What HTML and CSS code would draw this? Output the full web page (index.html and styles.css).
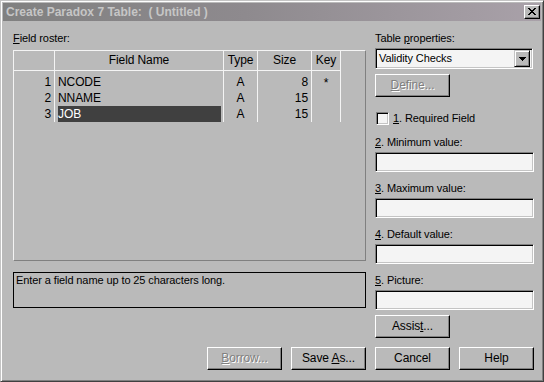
FILE: index.html
```html
<!DOCTYPE html>
<html>
<head>
<meta charset="utf-8">
<link rel="stylesheet" href="styles.css">
</head>
<body>
<div class="window">
  <div class="titlebar">
    <span class="title">Create Paradox 7 Table:&nbsp; ( Untitled )</span>
    <div class="closebtn">
      <svg width="8" height="7" viewBox="0 0 8 7"><path d="M0 0h2v1h-2zM1 1h2v1h-2zM2 2h4v1h-4zM3 3h2v1h-2zM2 4h4v1h-4zM1 5h2v1h-2zM0 6h2v1h-2zM6 0h2v1h-2zM5 1h2v1h-2zM5 5h2v1h-2zM6 6h2v1h-2z" fill="#000"/></svg>
    </div>
  </div>
  <div class="content">
    <div class="leftcol">
      <div class="label"><u>F</u>ield roster:</div>
      <div class="grid">
        <div class="col c-num">
          <div class="hd"></div>
          <div class="cells">
            <div class="cell">1</div>
            <div class="cell">2</div>
            <div class="cell">3</div>
          </div>
        </div>
        <div class="col c-name">
          <div class="hd">Field Name</div>
          <div class="cells">
            <div class="cell"><span class="val">NCODE</span></div>
            <div class="cell"><span class="val">NNAME</span></div>
            <div class="cell"><span class="val sel">JOB</span></div>
          </div>
        </div>
        <div class="col c-type">
          <div class="hd">Type</div>
          <div class="cells">
            <div class="cell">A</div>
            <div class="cell">A</div>
            <div class="cell">A</div>
          </div>
        </div>
        <div class="col c-size">
          <div class="hd">Size</div>
          <div class="cells">
            <div class="cell">8</div>
            <div class="cell">15</div>
            <div class="cell">15</div>
          </div>
        </div>
        <div class="col c-key">
          <div class="hd">Key</div>
          <div class="cells">
            <div class="cell">*</div>
            <div class="cell"></div>
            <div class="cell"></div>
          </div>
        </div>
      </div>
      <div class="status">Enter a field name up to 25 characters long.</div>
      <div class="btnrow">
        <div class="btn disabled"><span><u>B</u>orrow...</span></div>
        <div class="btn"><span>Save <u>A</u>s...</span></div>
      </div>
    </div>
    <div class="rightcol">
      <div class="label">Table <u>p</u>roperties:</div>
      <div class="combo">
        <span class="combo-text">Validity Checks</span>
        <div class="combo-btn">
          <svg width="7" height="4" viewBox="0 0 7 4"><path d="M0 0h7v1h-7zM1 1h5v1h-5zM2 2h3v1h-3zM3 3h1v1h-1z" fill="#000"/></svg>
        </div>
      </div>
      <div class="btn disabled define"><span><u>D</u>efine...</span></div>
      <div class="checkrow">
        <div class="checkbox"></div>
        <span><u>1</u>. Required Field</span>
      </div>
      <div class="field first">
        <div class="label"><u>2</u>. Minimum value:</div>
        <div class="input"></div>
      </div>
      <div class="field">
        <div class="label"><u>3</u>. Maximum value:</div>
        <div class="input"></div>
      </div>
      <div class="field">
        <div class="label"><u>4</u>. Default value:</div>
        <div class="input"></div>
      </div>
      <div class="field">
        <div class="label"><u>5</u>. Picture:</div>
        <div class="input"></div>
      </div>
      <div class="btn assist"><span>Assis<u>t</u>...</span></div>
      <div class="btnrow">
        <div class="btn"><span>Cancel</span></div>
        <div class="btn"><span>Help</span></div>
      </div>
    </div>
  </div>
</div>
</body>
</html>
```
FILE: styles.css
```css
* { box-sizing: border-box; }
html, body { margin: 0; padding: 0; background: #bababa; }
body {
  font-family: "Liberation Sans", Arial, sans-serif;
  font-size: 11px;
  letter-spacing: -0.1px;
  color: #000;
}
u { text-decoration: underline; text-underline-offset: 1px; }

.window {
  width: 544px;
  height: 382px;
  background: #bababa;
  border: 1px solid;
  border-color: #c4c4c4 #404040 #404040 #c4c4c4;
  box-shadow: inset 1px 1px 0 #ffffff, inset -1px -1px 0 #808080;
  padding: 2px;
}

.titlebar {
  height: 18px;
  background: linear-gradient(to right, #808080 0%, #8e8a8e 45%, #a9a1a9 100%);
  display: flex;
  align-items: center;
  justify-content: space-between;
  padding: 0 1px 0 3px;
}
.title {
  font-weight: bold;
  font-size: 12px;
  letter-spacing: 0;
  color: #c6c6c6;
  white-space: pre;
}
.closebtn {
  width: 16px;
  height: 14px;
  background: #bababa;
  border: 1px solid;
  border-color: #ffffff #000 #000 #ffffff;
  box-shadow: inset -1px -1px 0 #808080;
  display: flex;
  align-items: center;
  justify-content: center;
  padding: 0 1px 1px 0;
}
.closebtn svg { display: block; }

.content {
  display: flex;
  gap: 9px;
  padding: 11px 0 0 10px;
}
.leftcol { width: 353px; display: flex; flex-direction: column; }
.rightcol { width: 159px; display: flex; flex-direction: column; }

.label { height: 13px; line-height: 13px; white-space: nowrap; }
.leftcol > .label { margin-bottom: 5px; }
.rightcol > .label { margin-bottom: 3px; }
.field .label { margin-bottom: 3px; }

/* grid */
.grid {
  height: 211px;
  border: 1px solid;
  border-color: #f4f4f4 #808080 #808080 #f4f4f4;
  display: flex;
  align-items: flex-start;
}
.col {
  border-right: 1px solid #f4f4f4;
  display: flex;
  flex-direction: column;
}
.hd {
  height: 20px;
  line-height: 19px;
  border-bottom: 1px solid #f4f4f4;
  text-align: center;
  white-space: nowrap;
  font-size: 12px;
}
.cells { padding-top: 3px; }
.cell { height: 16px; line-height: 16px; white-space: nowrap; font-size: 12px; }
.c-num { width: 41px; }
.c-num .cell { text-align: right; padding-right: 3px; }
.c-name { width: 169px; }
.c-name .cell { padding: 0 2px 0 3px; }
.c-name .val { display: block; height: 16px; }
.c-name .sel { background: #404040; color: #fff; }
.c-type { width: 34px; }
.c-type .cell { text-align: center; }
.c-size { width: 54px; }
.c-size .cell { text-align: right; padding-right: 3px; }
.c-key { width: 29px; }
.c-key .cell { text-align: center; padding-top: 1px; }

.status {
  margin-top: 11px;
  height: 36px;
  border: 1px solid #000;
  padding: 1px 2px;
  line-height: 13px;
}

.btnrow {
  display: flex;
  justify-content: flex-end;
  gap: 9px;
  margin-top: 39px;
}
.rightcol .btnrow { margin-top: 9px; justify-content: flex-start; }

.btn {
  width: 75px;
  height: 23px;
  background: #bababa;
  border: 1px solid;
  border-color: #ffffff #000 #000 #ffffff;
  box-shadow: inset -1px -1px 0 #808080;
  display: flex;
  align-items: center;
  justify-content: center;
  line-height: 13px;
  padding-bottom: 1px;
  white-space: nowrap;
  font-size: 12px;
}
.btn.disabled { color: #808080; text-shadow: 1px 1px 0 #ffffff; }
.define { margin-top: 5px; }
.assist { margin-top: 5px; }

.combo {
  height: 21px;
  border: 1px solid;
  border-color: #808080 #ffffff #ffffff #808080;
  box-shadow: inset 1px 1px 0 #000, inset -1px -1px 0 #c4c4c4;
  background: #f4f4f4;
  display: flex;
  align-items: center;
  padding: 2px 2px 2px 3px;
  width: 158px;
}
.combo-text { flex: 1; line-height: 13px; }
.combo-btn {
  width: 16px;
  height: 17px;
  background: #bababa;
  border: 1px solid;
  border-color: #c4c4c4 #000 #000 #c4c4c4;
  box-shadow: inset 1px 1px 0 #fff, inset -1px -1px 0 #808080;
  display: flex;
  align-items: center;
  justify-content: center;
}
.combo-btn svg { display: block; }

.checkrow {
  margin-top: 15px;
  height: 13px;
  display: flex;
  align-items: center;
  gap: 4px;
  padding-left: 1px;
  line-height: 13px;
}
.checkbox {
  width: 13px;
  height: 13px;
  border: 1px solid;
  border-color: #808080 #ffffff #ffffff #808080;
  box-shadow: inset 1px 1px 0 #000, inset -1px -1px 0 #c4c4c4;
  background: #f4f4f4;
}

.field { margin-top: 10px; }
.field.first { margin-top: 11px; }
.input {
  width: 159px;
  height: 20px;
  border: 1px solid;
  border-color: #808080 #ffffff #ffffff #808080;
  box-shadow: inset 1px 1px 0 #000, inset -1px -1px 0 #c4c4c4;
  background: #f4f4f4;
}
```
